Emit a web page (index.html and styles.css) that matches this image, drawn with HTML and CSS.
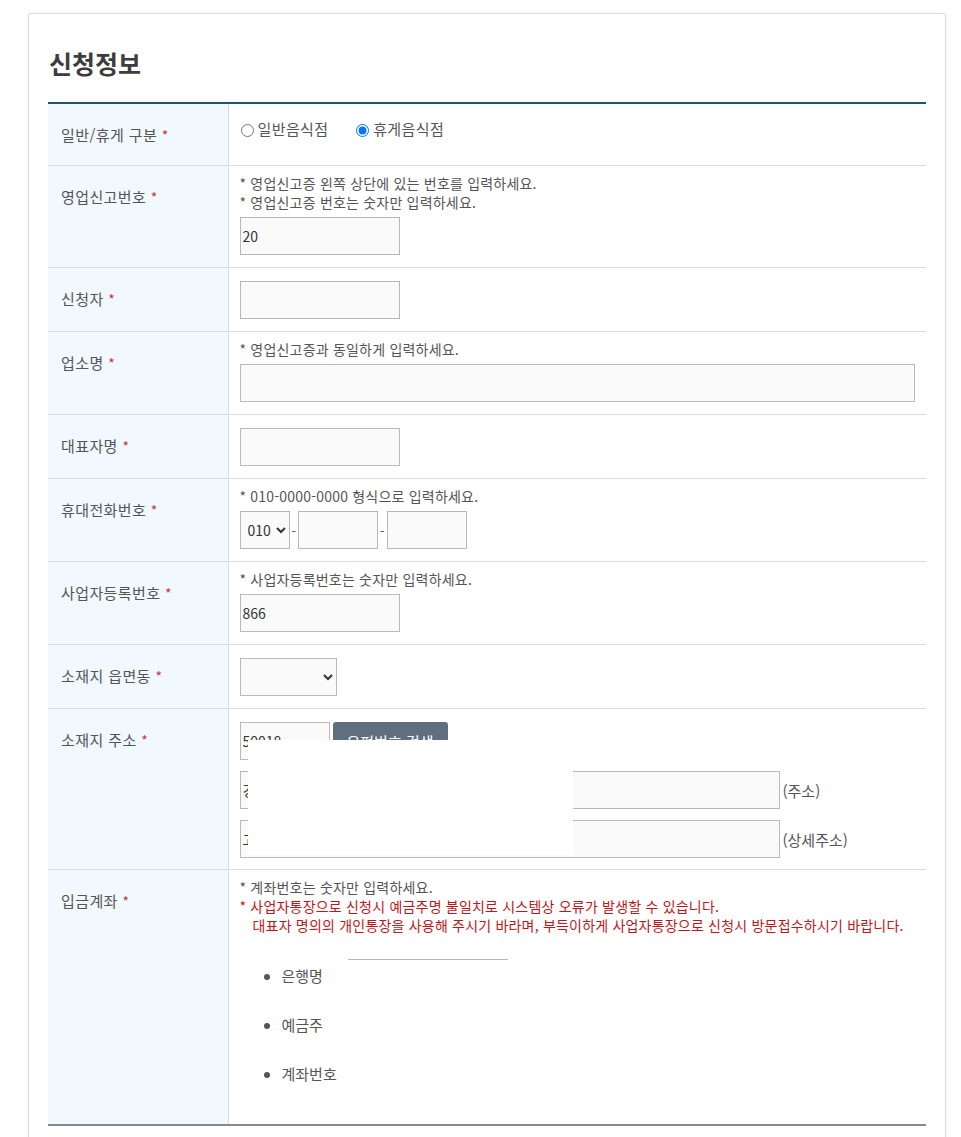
FILE: index.html
```html
<!DOCTYPE html>
<html lang="ko">
  <head>
    <meta charset="UTF-8" />
    <meta name="viewport" content="width=device-width, initial-scale=1.0" />
    <title>신청정보</title>
    <link rel="stylesheet" href="styles.css">
  </head>
  <body>
    <div class="card">
      <h2 class="title">신청정보</h2>

      <table class="form-table">
        <tr>
          <th>일반/휴게 구분 <span class="req">*</span></th>
          <td>
            <div class="radio-group">
              <label><input type="radio" name="kind" />일반음식점</label>
              <label><input type="radio" name="kind" checked />휴게음식점</label>
            </div>
          </td>
        </tr>
        <tr>
          <th>영업신고번호 <span class="req">*</span></th>
          <td>
            <p class="note">* 영업신고증 왼쪽 상단에 있는 번호를 입력하세요.</p>
            <p class="note">* 영업신고증 번호는 숫자만 입력하세요.</p>
            <input type="text" class="field" value="20" />
          </td>
        </tr>
        <tr>
          <th>신청자 <span class="req">*</span></th>
          <td><input type="text" class="field" /></td>
        </tr>
        <tr>
          <th>업소명 <span class="req">*</span></th>
          <td>
            <p class="note">* 영업신고증과 동일하게 입력하세요.</p>
            <input type="text" class="field field-full" />
          </td>
        </tr>
        <tr>
          <th>대표자명 <span class="req">*</span></th>
          <td><input type="text" class="field" /></td>
        </tr>
        <tr>
          <th>휴대전화번호 <span class="req">*</span></th>
          <td>
            <p class="note">* 010-0000-0000 형식으로 입력하세요.</p>
            <div class="phone">
              <select class="field phone-first">
                <option>010</option>
                <option>011</option>
                <option>016</option>
              </select>
              <span class="dash">-</span>
              <input type="text" class="field phone-part" />
              <span class="dash">-</span>
              <input type="text" class="field phone-part" />
            </div>
          </td>
        </tr>
        <tr>
          <th>사업자등록번호 <span class="req">*</span></th>
          <td>
            <p class="note">* 사업자등록번호는 숫자만 입력하세요.</p>
            <input type="text" class="field" value="866" />
          </td>
        </tr>
        <tr>
          <th>소재지 읍면동 <span class="req">*</span></th>
          <td>
            <select class="field town">
              <option></option>
            </select>
          </td>
        </tr>
        <tr>
          <th>소재지 주소 <span class="req">*</span></th>
          <td class="masked">
            <div class="address">
              <div class="addr-line">
                <input type="text" class="field zip" value="50018" />
                <button type="button" class="zip-btn">우편번호 검색</button>
              </div>
              <div class="addr-line">
                <input type="text" class="field addr" value="경남" />
                <span class="addr-tag">(주소)</span>
              </div>
              <div class="addr-line">
                <input type="text" class="field addr" value="고" />
                <span class="addr-tag">(상세주소)</span>
              </div>
            </div>
            <div class="redact redact-addr"></div>
          </td>
        </tr>
        <tr>
          <th>입금계좌 <span class="req">*</span></th>
          <td class="masked">
            <p class="note">* 계좌번호는 숫자만 입력하세요.</p>
            <p class="note warn">* 사업자통장으로 신청시 예금주명 불일치로 시스템상 오류가 발생할 수 있습니다.</p>
            <p class="note warn indent">대표자 명의의 개인통장을 사용해 주시기 바라며, 부득이하게 사업자통장으로 신청시 방문접수하시기 바랍니다.</p>
            <ul class="account">
              <li><span class="acct-label">은행명</span><input type="text" class="field acct" /></li>
              <li><span class="acct-label">예금주</span><input type="text" class="field acct" /></li>
              <li><span class="acct-label">계좌번호</span><input type="text" class="field acct" /></li>
            </ul>
            <div class="redact redact-acct"></div>
          </td>
        </tr>
      </table>
    </div>
  </body>
</html>
```

FILE: styles.css
```css
body {
  margin: 0;
  font-family: "Noto Sans CJK KR", "Noto Sans", sans-serif;
  color: #555;
  background: #fff;
}
.card {
  width: 878px;
  margin: 13px 0 0 28px;
  padding: 0 19px 40px;
  border: 1px solid #ddd;
  border-radius: 2px;
  box-shadow: 0 0 4px rgba(0, 0, 0, 0.06);
}
.title {
  margin: 0;
  padding: 32px 0 22px 1px;
  font-size: 25px;
  line-height: 34px;
  font-weight: bold;
  color: #3d3d3d;
}
.form-table {
  width: 100%;
  border-collapse: collapse;
  border-top: 2px solid #1e5371;
  border-bottom: 2px solid #888;
  font-size: 15px;
  line-height: 19px;
}
.form-table tr {
  border-bottom: 1px solid #dcdcdc;
}
.form-table th {
  box-sizing: border-box;
  width: 180px;
  padding: 21px 12px 20px 13px;
  background: #f1f8fe;
  border-right: 1px solid #d5dde6;
  text-align: left;
  vertical-align: top;
  font-weight: normal;
  letter-spacing: 0.4px;
  color: #555;
}
.req {
  color: #c33;
  font-size: 14px;
}
.form-table td {
  padding: 8px 11px 7px 11px;
  vertical-align: top;
}
.masked {
  position: relative;
}
.radio-group {
  padding-top: 7px;
  letter-spacing: 0.4px;
}
.radio-group label {
  margin-right: 22px;
}
.radio-group input {
  width: 13px;
  height: 13px;
  margin: 0 4px 0 1px;
  vertical-align: -2px;
}
.note {
  margin: 0;
  font-size: 14px;
  line-height: 19px;
  letter-spacing: 0.2px;
  color: #555;
}
.warn {
  color: #c0161b;
}
.indent {
  padding-left: 13px;
}
.field {
  box-sizing: border-box;
  display: block;
  height: 38px;
  width: 160px;
  margin: 5px 0;
  padding: 1px 2px;
  border: 1px solid #b9b9b9;
  background: #fafafa;
  font-family: inherit;
  font-size: 14px;
  color: #333;
}
.field-full {
  width: 100%;
}
.phone {
  display: flex;
  align-items: center;
  gap: 2px;
}
.phone-first {
  width: 50px;
  padding: 0 0 0 3px;
  font-size: 14px;
}
.phone-part {
  width: 80px;
}
.dash {
  font-size: 13px;
}
.town {
  width: 97px;
}
.address {
  display: flex;
  flex-direction: column;
  gap: 11px;
  padding: 5px 0 4px;
}
.addr-line {
  display: flex;
  align-items: center;
  gap: 3px;
}
.addr-line .field {
  margin: 0;
}
.zip {
  width: 90px;
}
.addr {
  width: 540px;
}
.zip-btn {
  height: 38px;
  width: 115px;
  padding: 0;
  border: none;
  border-radius: 3px;
  background: #5f6f80;
  color: #fff;
  font-family: inherit;
  font-size: 15px;
}
.addr-tag {
  font-size: 15px;
  color: #555;
}
.account {
  margin: 24px 0 22px;
  padding-left: 42px;
}
.account li {
  margin-bottom: 11px;
}
.account li:last-child {
  margin-bottom: 0;
}
.acct-label {
  display: inline-block;
  width: 66px;
  padding-bottom: 6px;
  vertical-align: middle;
}
.acct {
  display: inline-block;
  vertical-align: middle;
  margin: 0;
}
.redact {
  position: absolute;
  background: #fff;
}
.redact-addr {
  top: 31px;
  left: 19px;
  width: 325px;
  height: 115px;
}
.redact-acct {
  top: 90px;
  left: 118px;
  width: 170px;
  height: 140px;
}
```
